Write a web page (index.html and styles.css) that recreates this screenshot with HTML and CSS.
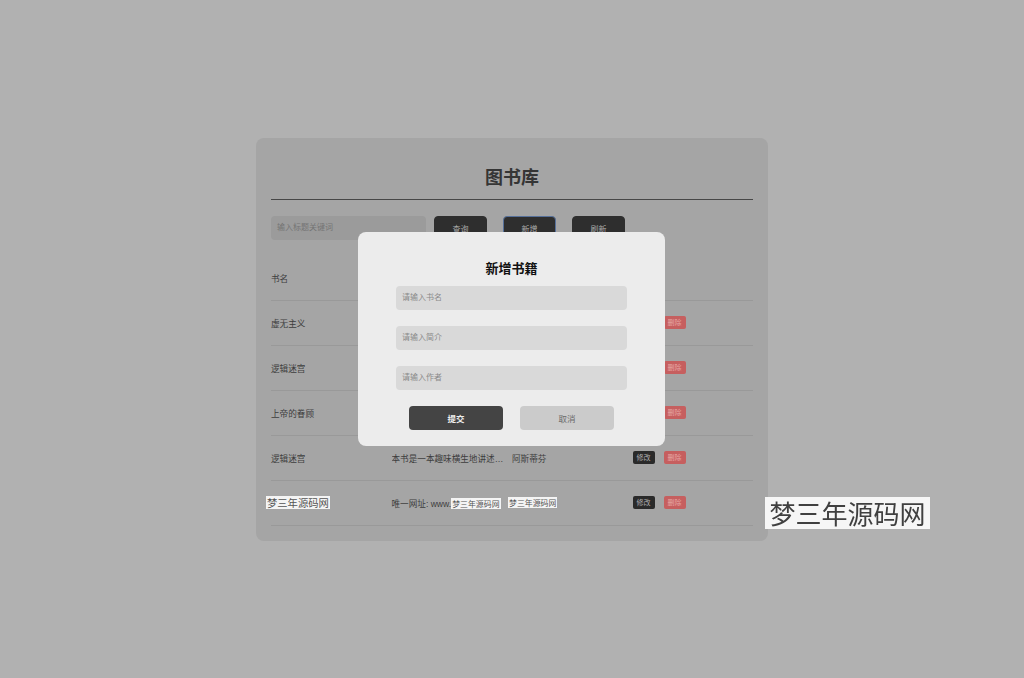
FILE: index.html
```html
<!DOCTYPE html>
<html lang="zh-CN">
<head>
<meta charset="utf-8">
<title>图书库</title>
<link rel="stylesheet" href="styles.css">
</head>
<body>
<div class="page">
  <div class="card">
    <div class="title">图书库</div>
    <div class="toolbar">
      <div class="search">输入标题关键词</div>
      <button class="btn">查询</button>
      <button class="btn btn-focus">新增</button>
      <button class="btn">刷新</button>
    </div>
    <div class="table">
      <div class="row head"><div class="cell">书名</div><div class="cell">简介</div><div class="cell">作者</div><div class="cell">操作</div></div>
      <div class="row"><div class="cell">虚无主义</div><div class="cell ell">本书是一本趣味横生地讲述哲学的书</div><div class="cell">阿斯蒂芬</div><div class="cell ops"><span class="op edit">修改</span><span class="op del">删除</span></div></div>
      <div class="row"><div class="cell">逻辑迷宫</div><div class="cell ell">本书是一本趣味横生地讲述逻辑的书</div><div class="cell">阿斯蒂芬</div><div class="cell ops"><span class="op edit">修改</span><span class="op del">删除</span></div></div>
      <div class="row"><div class="cell">上帝的眷顾</div><div class="cell ell">本书是一本趣味横生地讲述历史的书</div><div class="cell">阿斯蒂芬</div><div class="cell ops"><span class="op edit">修改</span><span class="op del">删除</span></div></div>
      <div class="row"><div class="cell">逻辑迷宫</div><div class="cell ell">本书是一本趣味横生地讲述逻辑的书</div><div class="cell">阿斯蒂芬</div><div class="cell ops"><span class="op edit">修改</span><span class="op del">删除</span></div></div>
      <div class="row"><div class="cell"><span class="wm wm-name">梦三年源码网</span></div><div class="cell">唯一网址: www.<span class="wm wm-small">梦三年源码网</span></div><div class="cell"><span class="wm wm-small wm-shift">梦三年源码网</span></div><div class="cell ops"><span class="op edit">修改</span><span class="op del">删除</span></div></div>
    </div>
  </div>
</div>

<div class="modal">
  <div class="modal-title">新增书籍</div>
  <div class="field">请输入书名</div>
  <div class="field">请输入简介</div>
  <div class="field">请输入作者</div>
  <div class="modal-actions">
    <button class="mbtn submit">提交</button>
    <button class="mbtn cancel">取消</button>
  </div>
</div>

<div class="watermark">梦三年源码网</div>
</body>
</html>
```

FILE: styles.css
```css
* { box-sizing: border-box; }
html, body { margin: 0; padding: 0; }
body {
  background: #b1b1b1;
  font-family: "Liberation Sans", "Noto Sans CJK SC", sans-serif;
  color: #3d3d3d;
  width: 1024px;
  height: 678px;
  overflow: hidden;
}
.page {
  height: 678px;
  display: flex;
  align-items: center;
  justify-content: center;
}
.card {
  width: 512px;
  height: 403px;
  background: #a5a5a5;
  border-radius: 8px;
  padding: 15px;
}
.title {
  padding: 13px 0 9px;
  line-height: 24px;
  font-size: 18px;
  font-weight: 700;
  text-align: center;
  color: #353535;
  border-bottom: 1px solid #474747;
}
.toolbar {
  display: flex;
  align-items: flex-start;
  margin-top: 16px;
  height: 26px;
}
.search {
  width: 155px;
  height: 24px;
  background: #9b9b9b;
  border-radius: 4px;
  font-size: 8px;
  line-height: 24px;
  padding-left: 6px;
  color: #747474;
}
.btn {
  width: 53px;
  height: 26px;
  margin: 0 8px;
  background: #2e2e2e;
  border: 1px solid #2e2e2e;
  border-radius: 4px;
  color: #a9a9a9;
  font-family: inherit;
  font-size: 8px;
  padding: 0;
}
.btn-focus { border-color: #56709a; }
.table { margin-top: 14px; }
.row {
  display: grid;
  grid-template-columns: repeat(4, 1fr);
  align-items: center;
  height: 45px;
  border-bottom: 1px solid #999999;
  font-size: 8.6px;
}
.cell {
  white-space: nowrap;
  color: #3d3d3d;
}
.ell {
  overflow: hidden;
  text-overflow: ellipsis;
  padding-right: 6px;
}
.ops { display: flex; gap: 9px; }
.op {
  display: inline-block;
  height: 13px;
  line-height: 13px;
  padding: 0 4px;
  font-size: 7px;
  border-radius: 2px;
}
.edit { background: #2a2a2a; color: #b0b0b0; }
.del { background: #c65f5f; color: #e6a6a6; }
.wm {
  background: #f4f4f4;
  color: #555;
  display: inline-block;
  font-family: "Noto Sans CJK SC", sans-serif;
}
.wm-name {
  margin-left: -5px;
  font-size: 10.3px;
  line-height: 13px;
  padding: 0 1px;
}
.wm-small {
  font-size: 7.9px;
  line-height: 11px;
  padding: 0 1px;
}
.wm-shift { margin-left: -4px; }
.modal {
  position: fixed;
  left: 358px;
  top: 232px;
  width: 307px;
  height: 214px;
  background: #ececec;
  border-radius: 8px;
  padding: 28px 0 16px;
  display: flex;
  flex-direction: column;
  align-items: center;
}
.modal-title {
  font-size: 13px;
  font-weight: 700;
  line-height: 18px;
  color: #111;
  margin-bottom: 8px;
}
.field {
  width: 231px;
  height: 24px;
  background: #d9d9d9;
  border-radius: 4px;
  font-size: 8px;
  line-height: 24px;
  padding-left: 6px;
  color: #8a8a8a;
  margin-bottom: 16px;
}
.modal-actions {
  display: flex;
  gap: 17px;
}
.mbtn {
  width: 94px;
  height: 24px;
  border: none;
  border-radius: 4px;
  font-family: inherit;
  font-size: 8.5px;
  padding: 0;
}
.submit { background: #444; color: #eee; font-weight: 700; }
.cancel { background: #cbcbcb; color: #6a6a6a; }
.watermark {
  position: fixed;
  left: 765px;
  top: 497px;
  width: 165px;
  height: 32px;
  background: #f6f6f6;
  color: #404040;
  font-family: "Noto Sans CJK SC", sans-serif;
  font-size: 26px;
  line-height: 32px;
  text-align: center;
}
```
